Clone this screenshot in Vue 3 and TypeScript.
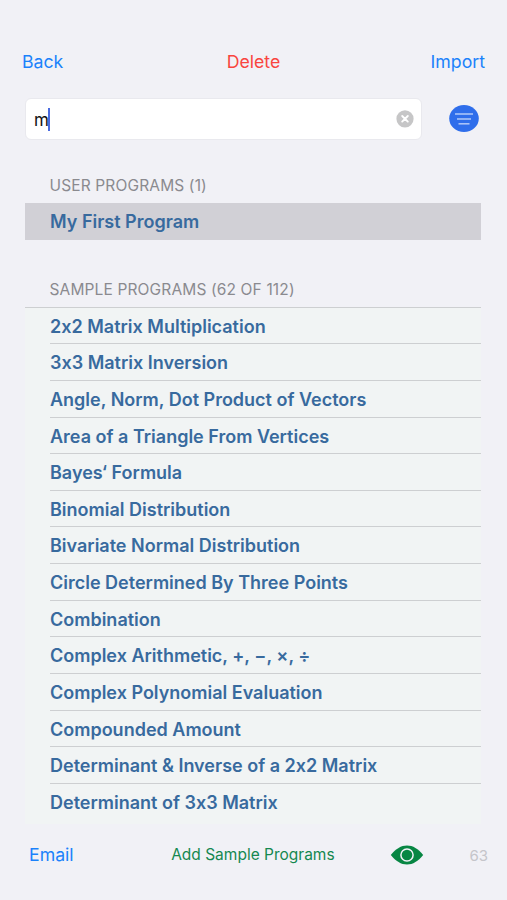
<script setup lang="ts">
import { ref } from 'vue'

const query = ref('m')
const userPrograms: string[] = ['My First Program']
const samplePrograms: string[] = [
  '2x2 Matrix Multiplication',
  '3x3 Matrix Inversion',
  'Angle, Norm, Dot Product of Vectors',
  'Area of a Triangle From Vertices',
  'Bayes‘ Formula',
  'Binomial Distribution',
  'Bivariate Normal Distribution',
  'Circle Determined By Three Points',
  'Combination',
  'Complex Arithmetic, +, −, ×, ÷',
  'Complex Polynomial Evaluation',
  'Compounded Amount',
  'Determinant & Inverse of a 2x2 Matrix',
  'Determinant of 3x3 Matrix',
]
</script>

<template>
  <main class="screen">
    <nav class="top">
      <button class="link">Back</button>
      <button class="link danger">Delete</button>
      <button class="link">Import</button>
    </nav>

    <div class="search-row">
      <div class="field">
        <span class="query">{{ query }}</span>
        <span class="caret"></span>
        <svg class="clear" viewBox="0 0 18 18" width="18" height="18">
          <circle cx="9" cy="8.8" r="8.6" fill="#c6c6c7" />
          <path d="M6.2 6l5.6 5.6M11.8 6l-5.6 5.6" stroke="#fff" stroke-width="1.9" stroke-linecap="round" />
        </svg>
      </div>
      <svg class="filter" viewBox="0 0 30 28" width="30" height="28">
        <ellipse cx="15" cy="13.5" rx="14.8" ry="13.5" fill="#2f6eeb" />
        <path d="M6 9h18" stroke="#a9c3f8" stroke-width="1.6" />
        <path d="M8 14h14" stroke="#a9c3f8" stroke-width="1.6" />
        <path d="M9.5 18.8h11" stroke="#a9c3f8" stroke-width="1.6" />
      </svg>
    </div>

    <h2 class="heading first">USER PROGRAMS (1)</h2>
    <ul class="list user">
      <li v-for="name in userPrograms" :key="name" class="row selected">{{ name }}</li>
    </ul>

    <h2 class="heading second">SAMPLE PROGRAMS (62 OF 112)</h2>
    <ul class="list samples">
      <li v-for="name in samplePrograms" :key="name" class="row"><span class="label">{{ name }}</span></li>
    </ul>

    <footer class="bottom">
      <button class="link email">Email</button>
      <button class="link add">Add Sample Programs</button>
      <svg class="eye" viewBox="0 0 34 20" width="34" height="20">
        <path d="M.8 10C6 3.7 11 .5 17 .5S28 3.7 33.2 10C28 16.3 23 19.5 17 19.5S6 16.3 .8 10Z" fill="#078643" />
        <circle cx="17" cy="10" r="6.1" fill="none" stroke="#f1f1f6" stroke-width="1.5" />
      </svg>
      <span class="count">63</span>
    </footer>
  </main>
</template>

<style>
body {
  background: #f1f1f6;
}
</style>

<style scoped>
.screen {
  box-sizing: border-box;
  width: 507px;
  height: 900px;
  padding-top: 46px;
  overflow: hidden;
  display: flex;
  flex-direction: column;
  background: #f1f1f6;
  font-family: Inter, "Liberation Sans", sans-serif;
  font-feature-settings: "calt" 0;
}
.link {
  border: 0;
  padding: 0;
  background: none;
  font: inherit;
  font-feature-settings: inherit;
  font-size: 17.7px;
  line-height: 32px;
  color: #1b82fb;
  white-space: nowrap;
}
.top {
  display: grid;
  grid-template-columns: 1fr auto 1fr;
  height: 32px;
  padding: 0 22px;
}
.top .link:first-child { justify-self: start; }
.top .link:last-child { justify-self: end; }
.top .danger { color: #f9453f; }
.search-row {
  display: flex;
  align-items: center;
  height: 42px;
  margin: 20px 28.5px 0 25px;
}
.field {
  box-sizing: border-box;
  display: flex;
  align-items: center;
  width: 397px;
  height: 42px;
  padding: 0 7px 0 8px;
  border: 1px solid #e9e9ee;
  border-radius: 6px;
  background: #fff;
}
.query { padding-top: 1px; font-size: 17px; color: #111; }
.caret { width: 2px; height: 23px; margin-left: -1px; background: #4a6be0; }
.clear { margin-left: auto; }
.filter { margin-left: auto; }
.heading {
  margin: 0;
  padding-left: 49.5px;
  font-size: 15.5px;
  font-weight: 400;
  letter-spacing: 0.14px;
  line-height: 20px;
  color: #8a8a8f;
}
.first { margin-top: 36px; }
.second { margin-top: 40px; }
.list {
  list-style: none;
  margin: 0 26px 0 25px;
  padding: 0;
}
.user { margin-top: 7px; }
.samples {
  margin-top: 7px;
  height: 516px;
  border-top: 1px solid #cdcfd1;
  background: #f1f4f4;
}
.row {
  box-sizing: border-box;
  height: 36.64px;
  padding-left: 25px;
  font-size: 18px;
  font-weight: 600;
  line-height: 38.2px;
  color: #386a9e;
  white-space: nowrap;
}
.selected { background: #d1d0d6; }
.label {
  display: block;
  box-sizing: border-box;
  height: 36.64px;
  border-bottom: 1px solid #cdcfd1;
}
.row:last-child .label { border-bottom: 0; }
.bottom {
  display: flex;
  align-items: center;
  height: 32px;
  margin-top: 15.6px;
  padding: 0 19px 0 29px;
}
.add { margin-left: 97.5px; font-size: 15.5px; color: #158850; }
.eye { margin-left: 55.5px; }
.count { margin-left: auto; font-size: 15px; color: #c5c5ca; }
</style>
